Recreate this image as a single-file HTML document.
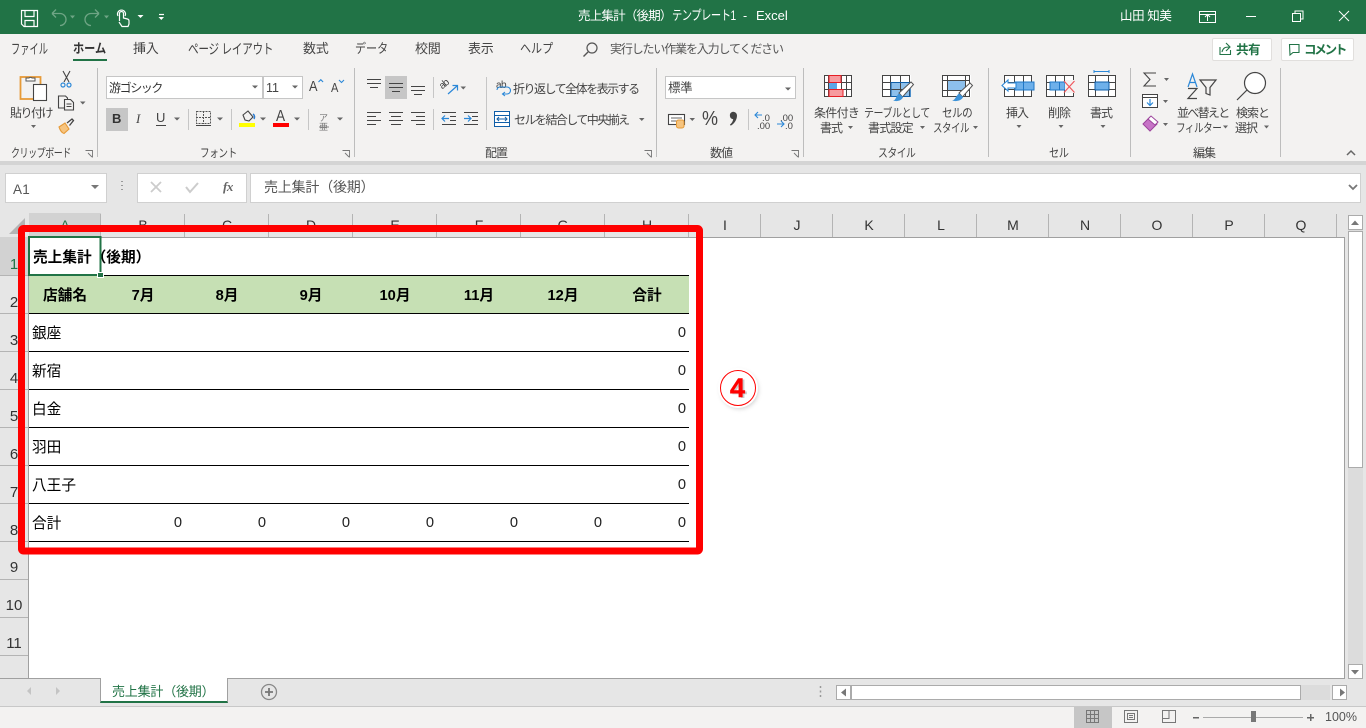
<!DOCTYPE html>
<html lang="ja"><head><meta charset="utf-8"><title>Excel</title>
<style>
html,body{margin:0;padding:0;width:1366px;height:728px;overflow:hidden;background:#fff}
body{position:relative;font-family:"Liberation Sans","Noto Sans CJK JP",sans-serif;color:#444}
.b{position:absolute;box-sizing:border-box}
.t{position:absolute;white-space:nowrap;line-height:16px;height:16px;transform-origin:left center}
.c{text-align:center}
.r{font-size:12px;letter-spacing:-1px;color:#444}
.tab{font-size:13px;top:41px;color:#444;letter-spacing:-.3px}
.cell{font-size:14.67px;color:#000;line-height:18px;height:18px}
.hd{font-size:14.67px;font-weight:bold;color:#000;line-height:18px;height:18px;top:287px;text-align:center;width:60px}
.n{font-size:14.67px;color:#222;text-align:right;width:30px;line-height:18px;height:18px}
.ch{font-size:14px;color:#333;top:217px;width:40px;text-align:center}
.rh{font-size:15px;color:#333;left:0;width:28px;text-align:center}
svg{position:absolute;left:0;top:0}
</style></head><body>
<div class="b" style="left:0;top:0;width:1366px;height:34px;background:#217346"></div>
<div class="b" style="left:0;top:34px;width:1366px;height:127px;background:#f3f2f1"></div>
<div class="b" style="left:0;top:161px;width:1366px;height:4px;background:#d4d4d4"></div>
<div class="b" style="left:0;top:165px;width:1366px;height:48px;background:#e6e6e6"></div>
<div class="b" style="left:0;top:213px;width:1345px;height:24px;background:#e6e6e6"></div>
<div class="b" style="left:1345px;top:213px;width:21px;height:465px;background:#e6e6e6"></div>
<div class="b" style="left:0;top:237px;width:28px;height:441px;background:#e6e6e6"></div>
<div class="b" style="left:0;top:678px;width:1366px;height:28px;background:#e6e6e6"></div>
<div class="b" style="left:0;top:706px;width:1366px;height:22px;background:#f3f2f1;border-top:1px solid #c8c8c8"></div>
<div class="t" style="left:578px;top:8px;font-size:12.5px;letter-spacing:-.8px;color:#fff">売上集計（後期）</div>
<div class="t" style="left:672px;top:8px;font-size:13.500px;letter-spacing:-.6px;color:#fff;transform:scaleX(.76)">テンプレート1</div>
<div class="t" style="left:743px;top:8px;font-size:12.5px;color:#fff">-</div>
<div class="t" style="left:756px;top:8px;font-size:13px;color:#fff">Excel</div>
<div class="t" style="left:1120px;top:8px;font-size:12.5px;letter-spacing:-.4px;color:#fff">山田 知美</div>
<div class="t tab" style="left:11px;font-size:14px;letter-spacing:0;transform:scaleX(.66)">ファイル</div>
<div class="t tab" style="left:73px;font-weight:bold;color:#333;letter-spacing:0;transform:scaleX(.86)">ホーム</div>
<div class="b" style="left:73px;top:59px;width:34px;height:2px;background:#217346"></div>
<div class="t tab" style="left:133px">挿入</div>
<div class="t tab" style="left:188px;font-size:14px;letter-spacing:-.4px;transform:scaleX(.76)">ページ レイアウト</div>
<div class="t tab" style="left:303px">数式</div>
<div class="t tab" style="left:355px;letter-spacing:0;transform:scaleX(.85)">データ</div>
<div class="t tab" style="left:415px">校閲</div>
<div class="t tab" style="left:468px">表示</div>
<div class="t tab" style="left:520px;letter-spacing:0;transform:scaleX(.85)">ヘルプ</div>
<div class="t r" style="left:610px;top:41px;letter-spacing:-1.15px;color:#555">実行したい作業を入力してください</div>
<div class="b" style="left:1212px;top:38px;width:60px;height:23px;background:#fff;border:1px solid #e1dfdd;border-radius:2px"></div>
<div class="t" style="left:1236px;top:42px;font-size:12.5px;font-weight:bold;color:#217346;letter-spacing:-.5px">共有</div>
<div class="b" style="left:1281px;top:38px;width:73px;height:23px;background:#fff;border:1px solid #e1dfdd;border-radius:2px"></div>
<div class="t" style="left:1304px;top:42px;font-size:12.5px;font-weight:bold;color:#217346;letter-spacing:-2.2px">コメント</div>
<div class="b" style="left:106px;top:76px;width:157px;height:23px;background:#fff;border:1px solid #c6c6c6"></div>
<div class="b" style="left:263px;top:76px;width:40px;height:23px;background:#fff;border:1px solid #c6c6c6"></div>
<div class="b" style="left:665px;top:76px;width:131px;height:23px;background:#fff;border:1px solid #c6c6c6"></div>
<div class="b" style="left:385px;top:76px;width:22px;height:23px;background:#c6c6c6"></div>
<div class="b" style="left:106px;top:108px;width:22px;height:23px;background:#c6c6c6"></div>
<div class="t r" style="left:109px;top:80px;letter-spacing:-1.4px;color:#333">游ゴシック</div>
<div class="t" style="left:266px;top:80px;font-size:12.5px;color:#444">11</div>
<div class="t" style="left:668px;top:80px;font-size:12.5px;color:#444;letter-spacing:-.4px">標準</div>
<div class="t" style="left:112px;top:111px;font-size:13px;font-weight:bold;color:#333">B</div>
<div class="t" style="left:136px;top:111px;font-size:13px;font-style:italic;font-family:'Liberation Serif',serif;color:#444">I</div>
<div class="t" style="left:156px;top:110px;font-size:13px;color:#444">U</div>
<div class="t" style="left:309px;top:79px;font-size:15px;color:#444;transform:scaleX(.85)">A</div>
<div class="t" style="left:331px;top:80px;font-size:13px;color:#444;transform:scaleX(.85)">A</div>
<div class="t" style="left:276px;top:109px;font-size:16px;color:#444;transform:scaleX(.85)">A</div>
<div class="t" style="left:319px;top:110px;font-size:9px;color:#777">ア</div>
<div class="t" style="left:319px;top:119px;font-size:9px;color:#777">亜</div>
<div class="t" style="left:441px;top:80px;font-size:10px;color:#444;letter-spacing:-1px;transform:rotate(-40deg)">ab</div>
<div class="t" style="left:496px;top:78px;font-size:10px;color:#444;letter-spacing:-.5px">ab</div>
<div class="t r" style="left:513px;top:81px;letter-spacing:-1.5px">折り返して全体を表示する</div>
<div class="t r" style="left:514px;top:112px;letter-spacing:-1.55px">セルを結合して中央揃え</div>
<div class="t" style="left:702px;top:111px;font-size:20px;color:#444;transform:scaleX(.9)">%</div>
<div class="t" style="left:762px;top:111px;font-size:9.5px;color:#444">.0</div>
<div class="t" style="left:757px;top:119px;font-size:9.5px;color:#444">.00</div>
<div class="t" style="left:780px;top:111px;font-size:9.5px;color:#444">.00</div>
<div class="t" style="left:785px;top:119px;font-size:9.5px;color:#444">.0</div>
<div class="t r" style="left:10px;top:105px;letter-spacing:-1.5px">貼り付け</div>
<div class="t r" style="left:814px;top:105px;letter-spacing:-.7px">条件付き</div>
<div class="t r" style="left:820px;top:120px">書式</div>
<div class="t r" style="left:864px;top:105px;letter-spacing:-.5px;transform:scaleX(.83)">テーブルとして</div>
<div class="t r" style="left:868px;top:120px;letter-spacing:-.8px">書式設定</div>
<div class="t r" style="left:942px;top:105px;letter-spacing:-.6px;transform:scaleX(.88)">セルの</div>
<div class="t r" style="left:933px;top:120px;letter-spacing:-.6px;transform:scaleX(.79)">スタイル</div>
<div class="t r" style="left:1006px;top:105px">挿入</div>
<div class="t r" style="left:1048px;top:105px">削除</div>
<div class="t r" style="left:1090px;top:105px">書式</div>
<div class="t r" style="left:1177px;top:105px;letter-spacing:-1.7px">並べ替えと</div>
<div class="t r" style="left:1176px;top:120px;letter-spacing:-.6px;transform:scaleX(.8)">フィルター</div>
<div class="t r" style="left:1236px;top:105px">検索と</div>
<div class="t r" style="left:1235px;top:120px">選択</div>
<div class="t r" style="left:11px;top:145px;letter-spacing:-.6px;transform:scaleX(.75)">クリップボード</div>
<div class="t r" style="left:200px;top:145px;letter-spacing:-.5px;transform:scaleX(.8)">フォント</div>
<div class="t r" style="left:485px;top:145px">配置</div>
<div class="t r" style="left:710px;top:145px">数値</div>
<div class="t r" style="left:878px;top:145px;letter-spacing:-.6px;transform:scaleX(.82)">スタイル</div>
<div class="t r" style="left:1049px;top:145px;letter-spacing:-.6px;transform:scaleX(.85)">セル</div>
<div class="t r" style="left:1193px;top:145px">編集</div>
<div class="b" style="left:5px;top:173px;width:102px;height:30px;background:#fff;border:1px solid #d0d0d0"></div>
<div class="t" style="left:13px;top:182px;font-size:13.5px;color:#555;letter-spacing:.3px">A1</div>
<div class="b" style="left:137px;top:173px;width:110px;height:30px;background:#fff;border:1px solid #d0d0d0"></div>
<div class="t" style="left:223px;top:179px;font-size:13px;font-style:italic;font-weight:bold;font-family:'Liberation Serif',serif;color:#666;letter-spacing:-.5px">fx</div>
<div class="b" style="left:250px;top:173px;width:1111px;height:30px;background:#fff;border:1px solid #d0d0d0"></div>
<div class="t" style="left:264px;top:179px;font-size:14px;color:#555;letter-spacing:-.2px">売上集計（後期）</div>
<div class="b" style="left:29px;top:213px;width:72px;height:24px;background:#d2d2d2"></div>
<div class="b" style="left:0;top:237px;width:28px;height:38px;background:#d2d2d2"></div>
<div class="t ch" style="left:45px;color:#217346">A</div><div class="t ch" style="left:123px">B</div><div class="t ch" style="left:207px">C</div><div class="t ch" style="left:291px">D</div><div class="t ch" style="left:375px">E</div><div class="t ch" style="left:459px">F</div><div class="t ch" style="left:543px">G</div><div class="t ch" style="left:627px">H</div>
<div class="t ch" style="left:705px">I</div><div class="t ch" style="left:777px">J</div><div class="t ch" style="left:849px">K</div><div class="t ch" style="left:921px">L</div><div class="t ch" style="left:993px">M</div><div class="t ch" style="left:1065px">N</div><div class="t ch" style="left:1137px">O</div><div class="t ch" style="left:1209px">P</div><div class="t ch" style="left:1281px">Q</div>
<div class="t rh" style="top:257px;color:#217346">1</div><div class="t rh" style="top:295px">2</div><div class="t rh" style="top:333px">3</div><div class="t rh" style="top:371px">4</div><div class="t rh" style="top:409px">5</div><div class="t rh" style="top:447px">6</div><div class="t rh" style="top:485px">7</div><div class="t rh" style="top:523px">8</div><div class="t rh" style="top:560px">9</div><div class="t rh" style="top:598px">10</div><div class="t rh" style="top:636px">11</div>
<div class="b" style="left:29px;top:276px;width:660px;height:37px;background:#c6e0b4"></div>
<div class="t cell" style="left:33px;top:249px;font-weight:bold">売上集計（後期）</div>
<div class="t hd" style="left:35px">店舗名</div><div class="t hd" style="left:113px">7月</div><div class="t hd" style="left:197px">8月</div><div class="t hd" style="left:281px">9月</div><div class="t hd" style="left:365px">10月</div><div class="t hd" style="left:449px">11月</div><div class="t hd" style="left:533px">12月</div><div class="t hd" style="left:617px">合計</div>
<div class="t cell" style="left:32px;top:325px">銀座</div><div class="t cell" style="left:32px;top:363px">新宿</div><div class="t cell" style="left:32px;top:401px">白金</div><div class="t cell" style="left:32px;top:439px">羽田</div><div class="t cell" style="left:32px;top:477px">八王子</div><div class="t cell" style="left:32px;top:515px">合計</div>
<div class="t n" style="left:656px;top:324px">0</div><div class="t n" style="left:656px;top:362px">0</div><div class="t n" style="left:656px;top:400px">0</div><div class="t n" style="left:656px;top:438px">0</div><div class="t n" style="left:656px;top:476px">0</div>
<div class="t n" style="left:152px;top:514px">0</div><div class="t n" style="left:236px;top:514px">0</div><div class="t n" style="left:320px;top:514px">0</div><div class="t n" style="left:404px;top:514px">0</div><div class="t n" style="left:488px;top:514px">0</div><div class="t n" style="left:572px;top:514px">0</div><div class="t n" style="left:656px;top:514px">0</div>
<div class="b" style="left:100px;top:678px;width:128px;height:25px;background:#fff;border:1px solid #a0a0a0;border-top:0;border-bottom:2px solid #217346"></div>
<div class="b" style="left:0;top:678px;width:100px;height:1px;background:#a0a0a0"></div>
<div class="b" style="left:228px;top:678px;width:1117px;height:1px;background:#a0a0a0"></div>
<div class="t" style="left:112px;top:684px;font-size:13px;color:#217346;letter-spacing:-.2px">売上集計（後期）</div>
<div class="b" style="left:851px;top:685px;width:450px;height:15px;background:#fff;border:1px solid #ababab"></div>
<div class="b" style="left:1301px;top:685px;width:29px;height:15px;background:#dcdcdc"></div>
<div class="b" style="left:836px;top:685px;width:15px;height:15px;background:#fff;border:1px solid #ababab"></div>
<div class="b" style="left:1332px;top:685px;width:15px;height:15px;background:#fff;border:1px solid #ababab"></div>
<div class="b" style="left:1348px;top:215px;width:15px;height:449px;background:#dcdcdc"></div>
<div class="b" style="left:1348px;top:215px;width:15px;height:15px;background:#fff;border:1px solid #ababab"></div>
<div class="b" style="left:1348px;top:231px;width:15px;height:237px;background:#fff;border:1px solid #ababab"></div>
<div class="b" style="left:1348px;top:664px;width:15px;height:15px;background:#fff;border:1px solid #ababab"></div>
<div class="b" style="left:1074px;top:707px;width:38px;height:21px;background:#c6c6c6"></div>
<div class="t" style="left:1325px;top:709px;font-size:12.5px;color:#555">100%</div>

<svg width="1366" height="728" viewBox="0 0 1366 728" fill="none" shape-rendering="crispEdges">
<g stroke="#b4b4b4">
<path d="M100.500 214V237M184.500 214V237M268.500 214V237M352.500 214V237M436.500 214V237M520.500 214V237M604.500 214V237M688.500 214V237M760.500 214V237M832.500 214V237M904.500 214V237M976.500 214V237M1048.500 214V237M1120.500 214V237M1192.500 214V237M1264.500 214V237M1336.500 214V237"/>
<path d="M0 275.500H28M0 313.500H28M0 351.500H28M0 389.500H28M0 427.500H28M0 465.500H28M0 503.500H28M0 541.500H28M0 579.500H28M0 617.500H28M0 655.500H28"/>
</g>
<path d="M28 237.500H1345M28.500 237V678M1344.500 237V678" stroke="#a0a0a0"/>
<path d="M29 275.500H689M29 313.500H689M29 351.500H689M29 389.500H689M29 427.500H689M29 465.500H689M29 503.500H689M29 541.500H689" stroke="#000"/>
<rect x="29" y="237" width="71.500" height="38" stroke="#217346" stroke-width="2"/>
<rect x="97" y="272" width="7" height="6" fill="#fff"/><rect x="98" y="273" width="5" height="4" fill="#217346"/>
<path d="M25 218V234H9Z" fill="#b4b4b4" shape-rendering="auto"/>
<rect x="21.500" y="228.500" width="678" height="322.500" rx="2" stroke="#f00" stroke-width="7" shape-rendering="auto"/>
<path d="M97.500 68V157M354.500 68V157M656.500 68V157M803.500 68V157M988.500 68V157M1130.500 68V157M1280.500 68V157" stroke="#bdbdbd"/>
<path d="M188.500 109V130M231.500 109V130M308.500 109V130M433.500 77V98M433.500 109V130M486.500 77V130M748.500 109V130" stroke="#c6c6c6"/>
<g shape-rendering="auto">
<g stroke="#fff" stroke-width="1.200">
<path d="M21.500 10.500H37.500V26.500H24L21.500 24Z"/><path d="M25 10.500V16.500H34V10.500M25 26.500V20.500H34V26.500"/>
<path d="M119.500 21V13.500a2 2 0 0 1 4 0V18l4 1a2 2 0 0 1 1.500 2v3l-1 2.500h-6L119 22"/><path d="M118 16a4 4 0 1 1 7 0"/>
<path d="M159 14.500h5"/>
</g>
<g stroke="#6fa585" stroke-width="1.300"><path d="M52 13.500h8a5 5 0 0 1 0 12M52 13.500l4-4M52 13.500l4 4"/><path d="M99 13.500h-8a5 5 0 0 0 0 12M99 13.500l-4-4M99 13.500l-4 4"/></g>
<path d="M70 15.500h5l-2.500 3zM104 15.500h5l-2.500 3z" fill="#6fa585"/>
<path d="M137.500 15h6l-3 3zM158.500 17h5.500l-2.700 3z" fill="#fff"/>
<path d="M1199.500 11.500h16v11h-16zM1207.500 21v-6M1205 17l2.500-2.500 2.500 2.500M1199.500 14.500h16" stroke="#fff"/>
<path d="M1246 16.500h10M1292.500 13.500h8v8h-8zM1295 13.500v-2.500h8v8h-2.500M1339 11l10 10M1349 11l-10 10" stroke="#fff" stroke-width="1"/>
<circle cx="592" cy="48" r="5" stroke="#555" stroke-width="1.200"/><path d="M588 52l-4.500 4.500" stroke="#555" stroke-width="1.400"/>
<path d="M1220 47v7.500h10.500V50M1222 52c1-4 3-5 7-5M1226 43l4 4-4 4" stroke="#217346" stroke-width="1.100"/>
<path d="M1289.500 44.500h9.500v8h-6l-3 2.500z" stroke="#217346" stroke-width="1.100"/>
<rect x="20.500" y="77" width="20" height="22" fill="#f3f2f1" stroke="#e69a37" stroke-width="1.800"/>
<path d="M26 81v-3h3a2 2 0 0 1 3 0h3v3z" fill="#fff" stroke="#555"/>
<rect x="33.500" y="84.500" width="13" height="16" fill="#fff" stroke="#444" stroke-width="1.100"/>
<path d="M31 125h5l-2.500 3zM80 101.500h5.500l-2.700 3z" fill="#666"/>
<path d="M63 71l6 11M70 71l-6 11" stroke="#444" stroke-width="1.100"/><circle cx="63" cy="85" r="2" stroke="#2b88d8" stroke-width="1.200"/><circle cx="69" cy="85" r="2" stroke="#2b88d8" stroke-width="1.200"/>
<path d="M64 108h-5.500V96h7l2 2v1M64.500 99.500h6l3 3v7.500h-9z" stroke="#444" stroke-width="1.100" fill="#f3f2f1"/><path d="M66.500 104h5M66.500 106.500h5" stroke="#444"/>
<path d="M59 127l6-4 4 6-5 4.500c-2-.5-4-3.500-5-6.500z" fill="#f6c47f" stroke="#e69a37" stroke-width="1.100"/><path d="M67 123l5-4 1.500 1.500-4 5" stroke="#444" stroke-width="1.300"/>
<path d="M252 85.500h6l-3 3zM292 85.500h6l-3 3zM174 117.500h6l-3 3zM217 117.500h6l-3 3zM260 117.500h6l-3 3zM294 117.500h6l-3 3zM337 117.500h6l-3 3zM460.500 86.500h5.500l-2.700 3zM639 118h5.500l-2.700 3zM785 87.500h6l-3 3zM689.500 118h5.500l-2.700 3zM848 126h5l-2.500 3zM920 126h5l-2.500 3zM973 126h5l-2.500 3zM1016.500 125h5l-2.500 3zM1058.500 125h5l-2.500 3zM1100.500 125h5l-2.500 3zM1164 78h5l-2.500 3zM1163 100h5l-2.500 3zM1163 123h5l-2.500 3zM1223 125.500h5l-2.500 3zM1264 125.500h5l-2.500 3z" fill="#666"/>
<path d="M318.500 82l2.300 -2.300 2.300 2.300M339 80l2.500 2.500 2.500-2.500" stroke="#2b88d8" stroke-width="1.100"/>
<path d="M156 125.500h10" stroke="#444"/>
<path d="M196.500 111.500h14v12h-14zM203.500 111v13M196 117.500h15" stroke="#555" stroke-dasharray="2 1"/><path d="M196 125.500h15" stroke="#444"/>
<path d="M243 115l5-4 5 6-4 4-4-1z" stroke="#444" stroke-width="1.100"/><path d="M253 114c1.500 1 2 3 1 5" stroke="#2b7cd3" stroke-width="1.500"/>
<rect x="239" y="123" width="16" height="4" fill="#ff0"/>
<rect x="273" y="123" width="16" height="4" fill="#f00"/>
<path d="M319 127h10" stroke="#888"/>
<path d="M367 79.500h14M367 83.500h14M370 87.500h8M389 83.500h14M389 87.500h14M392 91.500h8M411 86.500h14M411 90.500h14M414 94.500h8M367 112.500h14M367 116.500h9M367 120.500h14M367 124.500h9M389 112.500h14M391 116.500h10M389 120.500h14M391 124.500h10M411 112.500h14M416 116.500h9M411 120.500h14M416 124.500h9M442 112.500h14M450 116.500h6M450 120.500h6M442 124.500h14M464 112.500h14M472 116.500h6M472 120.500h6M464 124.500h14" stroke="#444" shape-rendering="crispEdges"/>
<path d="M449 118.500h-7M445 115.500l-3 3 3 3M464 118.500h7M468 115.500l3 3-3 3" stroke="#2b88d8" stroke-width="1.200"/>
<path d="M448 94l9-8M452.500 85.500h5v5" stroke="#2b88d8" stroke-width="1.200"/>
<path d="M497 90a3 3 0 0 1 3-3h7a3 3 0 0 1 0 7h-4M505 92l-2.500 2 2.500 2" stroke="#2b88d8" stroke-width="1.100"/>
<rect x="494.500" y="111.500" width="15" height="15" stroke="#0f5ea8" fill="#fff"/><path d="M495 115.500h14M495 122.500h14" stroke="#0f5ea8"/><path d="M497 119h10M499 117l-2 2 2 2M505 117l2 2-2 2" stroke="#0f5ea8"/>
<rect x="668.500" y="114.500" width="16" height="10" fill="#fff" stroke="#444" stroke-width="1.100"/><path d="M671 118h11M671 121h7" stroke="#666"/><rect x="676.500" y="120" width="7.500" height="8" rx="2" fill="#f6c47f" stroke="#e69a37"/>
<path d="M732 112a3.800 3.800 0 0 1 5 3.600c0 4-2.800 8.200-6.200 10l-.9-.9c1.800-1.500 3-3.500 3.300-5.500a3.800 3.800 0 0 1-1.200-7.200z" fill="#444"/>
<path d="M762 115h-7M758 112l-3 3 3 3M784 124h-7M781 121l3 3-3 3" stroke="#2b88d8" stroke-width="1.100"/>
<g shape-rendering="crispEdges">
<rect x="824" y="75" width="28" height="22" fill="#fff"/>
<path d="M824.500 75.500h27v21h-27zM824.500 82.500h27M824.500 89.500h27M828.500 75v22M841.500 75v22M846.500 75v22" stroke="#444"/>
<rect x="829" y="83" width="8" height="6" fill="#5ea6e6"/>
<rect x="829" y="75.500" width="12" height="7" fill="#f79b9f" stroke="#e61e25"/>
<rect x="829" y="89.500" width="14" height="7" fill="#f79b9f" stroke="#e61e25"/>
<rect x="883" y="75" width="28" height="22" fill="#fff"/><rect x="891" y="82" width="20" height="15" fill="#8dc0ec"/>
<path d="M882.500 75.500h27v21h-27zM882.500 82.500h27M882.500 89.500h27M890.500 75v22M900.500 75v22" stroke="#444"/>
<path d="M891 82.500h19v14h-19z" stroke="#0f5ea8"/>
<rect x="943" y="75" width="28" height="22" fill="#fff"/><rect x="948" y="80" width="18" height="11" fill="#8dc0ec"/>
<path d="M942.500 75.500h27v21h-27zM942.500 80.500h27M942.500 90.500h27M947.500 75v22M965.500 75v22" stroke="#444"/>
</g>
<path d="M899 93l12-11 2.500 2.500-11 12.500z" fill="#fff" stroke="#555"/>
<path d="M893 100.500c3 0 3-5 6-7l4 3.500c-1 3.500-6 5-10 3.500z" fill="#3d93d9"/>
<path d="M959 93l11-10 2.500 2.500-10 11.500z" fill="#fff" stroke="#555"/>
<path d="M952 100.500c3 0 4-5 7-7l4 3.500c-1 3.500-7 5-11 3.500z" fill="#3d93d9"/>
<g shape-rendering="crispEdges">
<rect x="1004" y="75" width="27" height="21" fill="#fff"/>
<path d="M1004.500 75.500h27v21h-27zM1014.500 75v21M1023.500 75v21M1004 82.500h28M1004 89.500h28" stroke="#444"/>
<rect x="1015" y="82" width="19" height="8" fill="#6eb0ea" stroke="#1f78c8"/>
<path d="M1023.500 82v8" stroke="#1f78c8"/>
<rect x="1046" y="75" width="27" height="21" fill="#fff"/>
<path d="M1046.500 75.500h27v21h-27zM1055.500 75v21M1064.500 75v21M1046 82.500h10M1046 89.500h10" stroke="#444"/>
<rect x="1050" y="82" width="15" height="8" fill="#6eb0ea" stroke="#1f78c8"/><path d="M1059.500 82v8" stroke="#1f78c8"/>
<rect x="1065" y="80" width="11" height="13" fill="#f3f2f1"/>
<rect x="1088" y="75" width="27" height="21" fill="#fff"/>
<path d="M1088.500 75.500h27v21h-27zM1095.500 75v21M1108.500 75v21M1088 82.500h28M1088 89.500h28" stroke="#444"/>
<rect x="1095" y="82" width="14" height="8" fill="#6eb0ea" stroke="#0f5ea8"/>
<path d="M1094 71.500h15M1094 70v3M1109 70v3" stroke="#2b88d8"/>
</g>
<path d="M1002 85.500l6-5.500v3h8v5h-8v3z" fill="#fff" stroke="#2b88d8" stroke-width="1.100"/>
<path d="M1064 81l10.500 11.500M1074.500 81l-10.500 11.500" stroke="#f0565c" stroke-width="1.200"/>
<path d="M1156 73h-12l6 6.500-6 6.500h12" stroke="#444" stroke-width="1.100"/>
<rect x="1142.500" y="94.500" width="15" height="13" stroke="#444" fill="#fff"/><path d="M1142 97.500h16" stroke="#444"/><path d="M1150 99v6M1147 102.500l3 3 3-3" stroke="#2b88d8" stroke-width="1.200"/>
<path d="M1143 124l7-7 7 7-7 7z" fill="#c774c7" stroke="#9c449c"/><path d="M1148 119l3-3 7 6-3 3z" fill="#fff" stroke="#9c449c"/>
<path d="M1188 87l4.500-13 4.500 13M1190 82.500h5" stroke="#2b88d8" stroke-width="1.200"/>
<path d="M1188 88.500h9l-9 10h9" stroke="#444" stroke-width="1.200"/>
<path d="M1200 80h16l-6 7.500v7.500l-4-1.500v-6z" stroke="#444" stroke-width="1.200"/>
<circle cx="1255" cy="83" r="10.500" fill="#fff" stroke="#444" stroke-width="1.200"/><path d="M1247 90l-10 10" stroke="#444" stroke-width="1.200"/>
<path d="M1347 155l4-4 4 4" stroke="#666" stroke-width="1.500"/>
<path d="M85.500 150.500h7v7M88 153l4 4M342.500 150.500h7v7M345 153l4 4M644.500 150.500h7v7M647 153l4 4M791.500 150.500h7v7M794 153l4 4" stroke="#777" stroke-width=".9"/>
<path d="M91 185h8l-4 4z" fill="#777"/>
<path d="M122 181v1M122 185v1M122 189v1" stroke="#999" stroke-width="2"/>
<path d="M151 182l10 10M161 182l-10 10" stroke="#ccc" stroke-width="1.800"/>
<path d="M186 187l4 5 8-9" stroke="#ccc" stroke-width="2"/>
<path d="M1349 185l4 4 4-4" stroke="#777" stroke-width="1.800"/>
<path d="M1351 225l4-4.500 4 4.500zM1351 670h8l-4 4.500zM846 688.500v8l-5-4zM1340 688.500v8l5-4z" fill="#777"/>
<path d="M31 687v8l-4-4zM56 687v8l4-4z" fill="#c4c4c4"/>
<path d="M820.500 686v2M820.500 690.500v2M820.500 695v2" stroke="#999" stroke-width="1.500"/>
<circle cx="269" cy="692" r="7.500" stroke="#888" stroke-width="1.300"/><path d="M269 688v8M265 692h8" stroke="#777" stroke-width="1.800"/>
<g shape-rendering="crispEdges" stroke="#777">
<path d="M1086.500 710.500h12v12h-12zM1086.500 714.500h12M1086.500 718.500h12M1090.500 710v13M1094.500 710v13"/>
<path d="M1124.500 710.500h13v12h-13zM1127.500 713.500h7v6h-7zM1129 715.500h4M1129 717.500h4"/>
<path d="M1162.500 710.500h13v12h-13zM1162.500 718.500h6.500v-8"/>
<path d="M1203 717.500h100" stroke="#aaa"/>
<path d="M1193 717.500h6M1307 717.500h7M1310.500 714v7" stroke-width="1.500" stroke="#666"/>
</g>
<rect x="1251" y="711" width="5" height="11" fill="#777"/>
<defs><filter id="s" x="-30%" y="-30%" width="170%" height="170%"><feGaussianBlur stdDeviation="2"/></filter></defs>
<circle cx="739.500" cy="390" r="19" fill="#999" opacity=".45" filter="url(#s)"/>
<circle cx="738" cy="388" r="20" fill="#fff"/>
<circle cx="738" cy="388" r="17.500" stroke="#f00" stroke-width="1"/>
<text x="739.500" y="398" text-anchor="middle" font-family="Liberation Sans" font-size="27" font-weight="bold" fill="#ccc">4</text>
<text x="737.500" y="397" text-anchor="middle" font-family="Liberation Sans" font-size="27" font-weight="bold" fill="#f00" stroke="#f00" stroke-width=".5">4</text>
</g>
</svg>
</body></html>
